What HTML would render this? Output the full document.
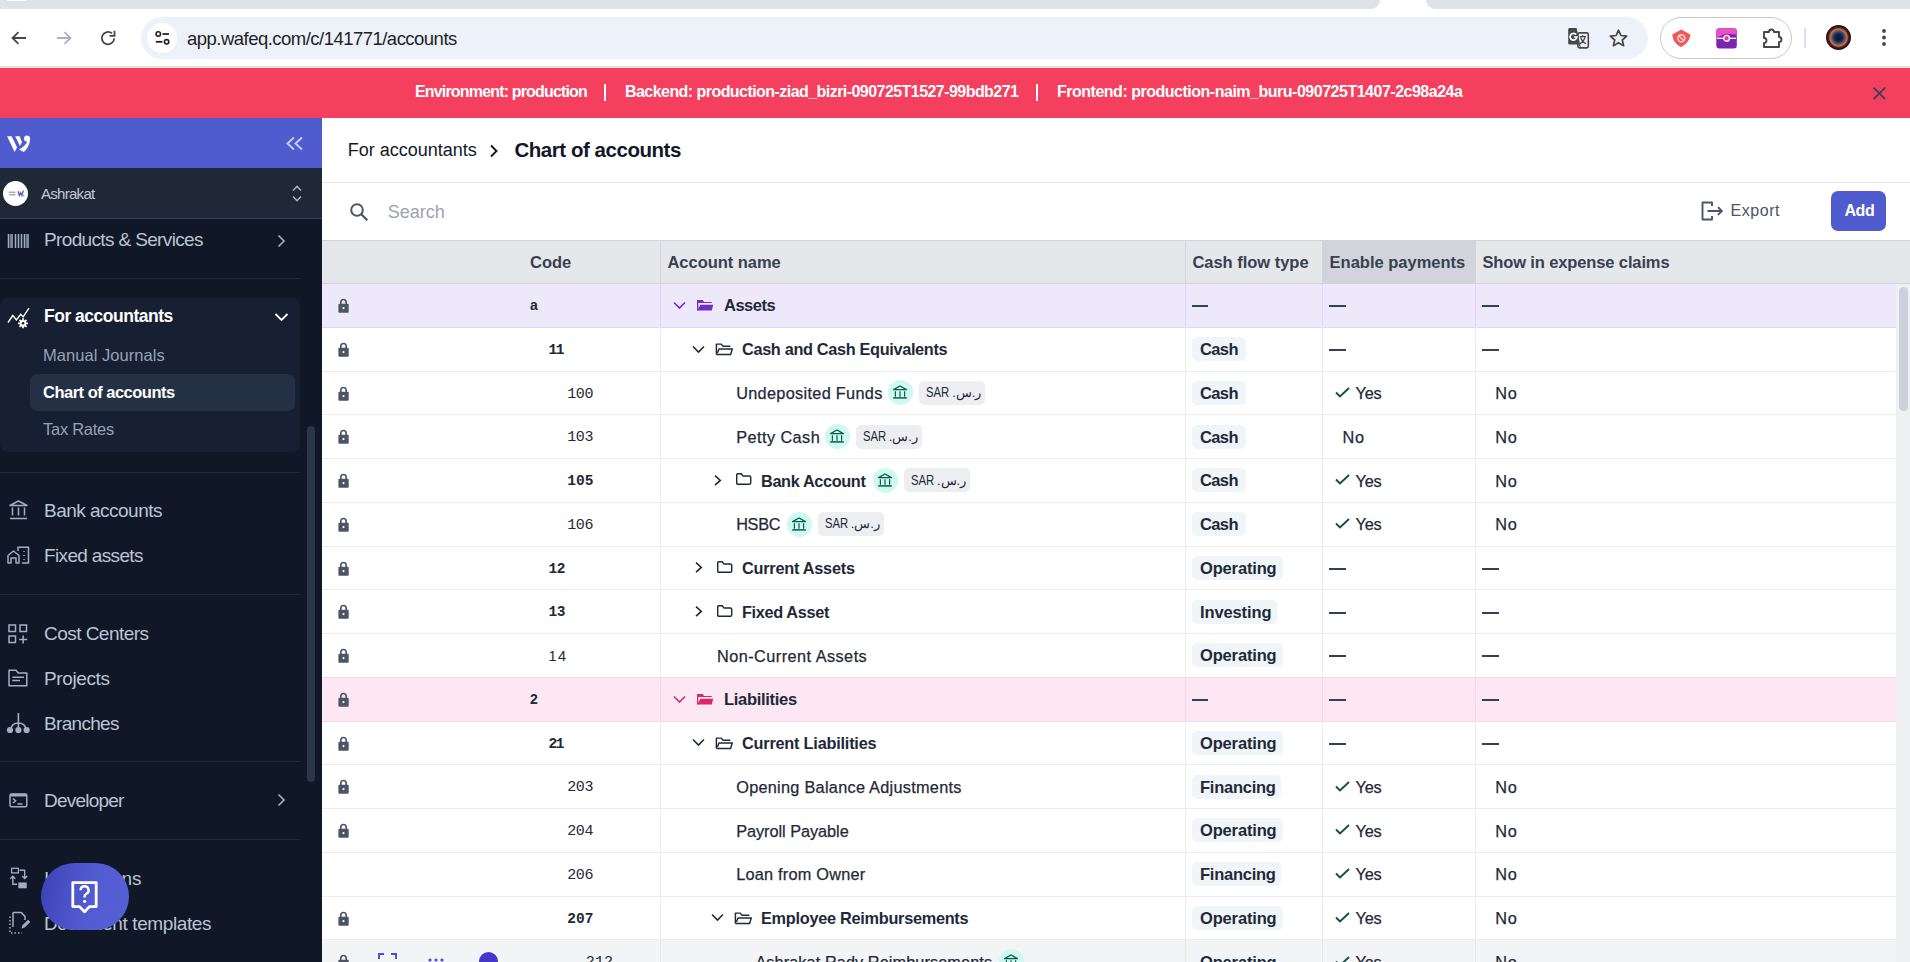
<!DOCTYPE html>
<html><head><meta charset="utf-8">
<style>
*{box-sizing:border-box;margin:0;padding:0}
html,body{width:1910px;height:962px;overflow:hidden;background:#fff;font-family:"Liberation Sans",sans-serif;position:relative}
.a{position:absolute;display:block}
.t{position:absolute;white-space:nowrap;line-height:1}
</style></head><body>
<div class="a" style="left:0px;top:0px;width:1910px;height:9px;background:#dee3ea;"></div>
<div class="a" style="left:1370px;top:0px;width:66px;height:9px;background:#fff;"></div>
<div class="a" style="left:1360px;top:0px;width:20px;height:9px;background:#dee3ea;border-bottom-right-radius:10px"></div>
<div class="a" style="left:1426px;top:0px;width:20px;height:9px;background:#dee3ea;border-bottom-left-radius:10px"></div>
<div class="a" style="left:7px;top:0px;width:19px;height:1px;background:#fff;"></div>
<div class="a" style="left:0px;top:9px;width:1910px;height:57px;background:#fff;"></div>
<div class="a" style="left:0px;top:66px;width:1910px;height:2px;background:#e1e3e6;"></div>
<div class="a" style="left:141px;top:17px;width:1507px;height:42px;background:#edf1f9;border-radius:21px"></div>
<div class="a" style="left:147px;top:23px;width:30px;height:30px;background:#fff;border-radius:50%"></div>
<svg class="a" style="left:10px;top:29px;" width="18" height="18" viewBox="0 0 18 18" fill="none"><path d="M16 9H3M8.5 3.2L2.5 9l6 5.8" stroke="#474747" stroke-width="1.8"/></svg>
<svg class="a" style="left:55px;top:29px;" width="18" height="18" viewBox="0 0 18 18" fill="none"><path d="M2 9h13M9.5 3.2L15.5 9l-6 5.8" stroke="#a9b1c9" stroke-width="1.8"/></svg>
<svg class="a" style="left:99px;top:29px;" width="18" height="18" viewBox="0 0 18 18" fill="none"><path d="M15.2 9.3A6.2 6.2 0 1 1 13 4.4" stroke="#474747" stroke-width="1.8"/><path d="M15.5 1.8v5h-5" stroke="#474747" stroke-width="1.8"/></svg>
<svg class="a" style="left:154px;top:30px;" width="17" height="16" viewBox="0 0 17 16" fill="none"><circle cx="4.3" cy="4" r="2.2" stroke="#222" stroke-width="1.6"/><path d="M8.5 4h6.5" stroke="#222" stroke-width="1.8"/><circle cx="12.6" cy="11.8" r="2.2" stroke="#222" stroke-width="1.6"/><path d="M1.8 11.8h6.6" stroke="#222" stroke-width="1.8"/></svg>
<span id="t0" class="t" style="left:187.00px;top:29.83px;font-size:18.5px;color:#1f1f1f;font-weight:400;font-family:'Liberation Sans',sans-serif;letter-spacing:-0.522px;">app.wafeq.com/c/141771/accounts</span>
<svg class="a" style="left:1560px;top:22px;" width="40" height="33" viewBox="0 0 40 33" fill="none"><rect x="17.9" y="10.9" width="10.4" height="15" rx="1.6" stroke="#474747" stroke-width="1.6"/><path d="M9.6 6h7L21 26.6l-2.6-4H9.6q-1.4 0-1.4-1.4V7.4Q8.2 6 9.6 6z" fill="#474747"/><path d="M16.2 12.6A3.4 3.4 0 1 0 16.9 15H13.9" stroke="#fff" stroke-width="1.7"/><path d="M19.8 14.6h6.2M22.8 13.1v1.5M20.6 15.3c.8 2.8 2.6 5 5.2 6.3M25 15.3c-.8 2.8-2.4 5-5 6.3" stroke="#474747" stroke-width="1.2"/></svg>
<svg class="a" style="left:1608px;top:28px;" width="21" height="20" viewBox="0 0 21 20" fill="none"><path d="M10.5 2.2l2.4 5.3 5.8.6-4.4 3.9 1.3 5.7-5.1-3-5.1 3 1.3-5.7-4.4-3.9 5.8-.6z" stroke="#474747" stroke-width="1.7" stroke-linejoin="round"/></svg>
<div class="a" style="left:1660px;top:17px;width:132px;height:42px;background:transparent;border:1px solid #c7cacc;border-radius:21px"></div>
<svg class="a" style="left:1671px;top:28px;" width="21" height="21" viewBox="0 0 21 21" fill="none"><path d="M10.3 1.5L19.3 6.4C19 12 15.2 16.6 9.9 18.9 4.8 16.6 1.6 12 1.3 6.4z" fill="#f05757"/><circle cx="10.3" cy="10.2" r="3.5" stroke="#fcd9d9" stroke-width="1.4"/><path d="M8 7.9l4.6 4.6" stroke="#fcd9d9" stroke-width="1.4"/></svg>
<svg class="a" style="left:1716px;top:28px;" width="21" height="21" viewBox="0 0 21 21" fill="none"><rect x="0.3" y="0.3" width="20.5" height="20.3" rx="3" fill="#7c24b2"/><path d="M0.3 3.3a3 3 0 0 1 3-3h14.5a3 3 0 0 1 3 3V6.2H13l-2.5-.1-2.4.4-7.8 3.2z" fill="#e84fc4"/><path d="M1 10.3h19" stroke="#fff" stroke-width="1.3"/><circle cx="10.6" cy="10.3" r="2.9" fill="#e83a9a" stroke="#fff" stroke-width="1.4"/></svg>
<svg class="a" style="left:1761px;top:27px;" width="23" height="21" viewBox="0 0 23 21" fill="none"><path d="M3 5h5a2.5 2.5 0 0 1 5 0h5v5a2.5 2.5 0 0 1 0 5v5H3v-4a2.5 2.5 0 0 0 0-5z" stroke="#474747" stroke-width="1.9" stroke-linejoin="round"/></svg>
<div class="a" style="left:1804px;top:28px;width:2px;height:20px;background:#dcdcf5;"></div>
<div class="a" style="left:1826px;top:25px;width:25px;height:25px;border-radius:50%;background:radial-gradient(circle closest-side,#0a1530 0,#132248 30%,#3a4e78 48%,#a86a40 62%,#c47a3a 68%,#5e2622 78%,#2e1218 90%,#22101a 100%)"></div>
<svg class="a" style="left:1880px;top:28px;" width="8" height="19" viewBox="0 0 8 19" fill="none"><circle cx="4" cy="3" r="1.9" fill="#474747"/><circle cx="4" cy="9.5" r="1.9" fill="#474747"/><circle cx="4" cy="16" r="1.9" fill="#474747"/></svg>
<div class="a" style="left:0px;top:68px;width:1910px;height:50px;background:#f43f5e;"></div>
<span id="t1" class="t" style="left:415.00px;top:83.62px;font-size:16px;color:#fff;font-weight:700;font-family:'Liberation Sans',sans-serif;letter-spacing:-0.833px;">Environment: production</span>
<div class="a" style="left:604px;top:84px;width:2px;height:17px;background:#fff;"></div>
<span id="t2" class="t" style="left:625.00px;top:83.62px;font-size:16px;color:#fff;font-weight:700;font-family:'Liberation Sans',sans-serif;letter-spacing:-0.551px;">Backend: production-ziad_bizri-090725T1527-99bdb271</span>
<div class="a" style="left:1036px;top:84px;width:2px;height:17px;background:#fff;"></div>
<span id="t3" class="t" style="left:1057.00px;top:83.62px;font-size:16px;color:#fff;font-weight:700;font-family:'Liberation Sans',sans-serif;letter-spacing:-0.489px;">Frontend: production-naim_buru-090725T1407-2c98a24a</span>
<svg class="a" style="left:1870px;top:84px;" width="18" height="18" viewBox="0 0 18 18" fill="none"><path d="M3.6 3.6l11.6 11.6M15.2 3.6L3.6 15.2" stroke="#334155" stroke-width="1.7"/></svg>
<div class="a" style="left:0px;top:118px;width:322px;height:844px;background:#101828;"></div>
<div class="a" style="left:0px;top:118px;width:322px;height:50px;background:#505bd0;"></div>
<svg class="a" style="left:0px;top:125px;" width="40" height="35" viewBox="0 0 40 35" fill="none"><path d="M7.1 11.3h4.6l5.4 11.3-2.5 4.4z" fill="#fff"/><path d="M15.1 11.3h4.6l2.2 6-1.9 3.7z" fill="#fff"/><path d="M24 12.9a2.9 2.9 0 1 1 6 1.6c-.3 5-3 10-6.3 12.5l-4.6-2.6c3.9-1.9 7.2-4.9 8-7.8A2.9 2.9 0 0 1 24 12.9z" fill="#fff"/></svg>
<svg class="a" style="left:285px;top:136px;" width="19" height="15" viewBox="0 0 19 15" fill="none"><path d="M9 1.5L2.5 7.5 9 13.5M17 1.5L10.5 7.5 17 13.5" stroke="#c9ccf4" stroke-width="1.9"/></svg>
<div class="a" style="left:0px;top:168px;width:322px;height:50px;background:#1e2837;"></div>
<div class="a" style="left:0px;top:218px;width:322px;height:1px;background:#334155;"></div>
<div class="a" style="left:3px;top:181px;width:25px;height:25px;border-radius:50%;background:#fff"></div>
<svg class="a" style="left:7px;top:189px;" width="18" height="9" viewBox="0 0 18 9" fill="none"><path d="M1.8 3.2h6.6M2.2 5.8h6.2" stroke="#6a7080" stroke-width="0.9"/><path d="M11 2l1.3 4.5 1.3-3 1.3 3L16.5 1.5" stroke="#4d5bd8" stroke-width="1.2"/><circle cx="16.6" cy="6.8" r="0.8" fill="#4aa3e8"/></svg>
<span id="t4" class="t" style="left:41.00px;top:186.04px;font-size:15px;color:#c3cad5;font-weight:400;font-family:'Liberation Sans',sans-serif;letter-spacing:-0.718px;">Ashrakat</span>
<svg class="a" style="left:290px;top:184px;" width="14" height="19" viewBox="0 0 14 19" fill="none"><path d="M3 6.5L7 2.5l4 4M3 12.5l4 4 4-4" stroke="#a2aec0" stroke-width="1.6"/></svg>
<svg class="a" style="left:7px;top:233px;" width="23" height="16" viewBox="0 0 23 16" fill="none"><path d="M1.5 1v14M5 1v14M8.5 1v14M11.5 1v14M14.5 1v14M17.5 1v14M21 1v14" stroke="#a2aec0" stroke-width="1.5"/><path d="M3.3 1v14M19.3 1v14" stroke="#a2aec0" stroke-width="0.8"/></svg>
<span id="t5" class="t" style="left:44.00px;top:230.27px;font-size:19px;color:#bac4d2;font-weight:400;font-family:'Liberation Sans',sans-serif;letter-spacing:-0.642px;">Products &amp; Services</span>
<svg class="a" style="left:275px;top:234px;" width="12" height="14" viewBox="0 0 12 14" fill="none"><path d="M3.5 1.5L9 7l-5.5 5.5" stroke="#a2aec0" stroke-width="1.7"/></svg>
<div class="a" style="left:0px;top:278px;width:300px;height:1px;background:#1f2a3a;"></div>
<div class="a" style="left:0px;top:298px;width:300px;height:154px;background:#172032;border-radius:8px"></div>
<svg class="a" style="left:7px;top:307px;" width="24" height="23" viewBox="0 0 24 23" fill="none"><path d="M1 15.5L5.8 8.5l3.6 4.4 4.3-5.6 2.4 2.6L22 1.2" stroke="#fff" stroke-width="1.4"/><circle cx="16" cy="16.3" r="3.4" fill="#fff"/><path d="M16 11.3v10M11 16.3h10M12.5 12.8l7 7M19.5 12.8l-7 7" stroke="#fff" stroke-width="1.7"/><circle cx="16" cy="16.3" r="1.3" fill="#172032"/></svg>
<span id="t6" class="t" style="left:44.00px;top:308.24px;font-size:17.5px;color:#fff;font-weight:700;font-family:'Liberation Sans',sans-serif;letter-spacing:-0.493px;">For accountants</span>
<svg class="a" style="left:274px;top:311px;" width="15" height="12" viewBox="0 0 15 12" fill="none"><path d="M1.5 3l6 6 6-6" stroke="#fff" stroke-width="1.8"/></svg>
<span id="t7" class="t" style="left:43.00px;top:347.26px;font-size:16.5px;color:#94a3b8;font-weight:400;font-family:'Liberation Sans',sans-serif;letter-spacing:0.049px;">Manual Journals</span>
<div class="a" style="left:30px;top:374px;width:265px;height:37px;background:#243044;border-radius:7px"></div>
<span id="t8" class="t" style="left:43.00px;top:384.36px;font-size:16.5px;color:#fff;font-weight:700;font-family:'Liberation Sans',sans-serif;letter-spacing:-0.506px;">Chart of accounts</span>
<span id="t9" class="t" style="left:43.00px;top:420.96px;font-size:16.5px;color:#94a3b8;font-weight:400;font-family:'Liberation Sans',sans-serif;letter-spacing:-0.264px;">Tax Rates</span>
<div class="a" style="left:0px;top:472px;width:300px;height:1px;background:#1f2a3a;"></div>
<svg class="a" style="left:8px;top:499px;" width="21" height="21" viewBox="0 0 21 21" fill="none"><path d="M2 6.5L10.5 2 19 6.5z" stroke="#a2aec0" stroke-width="1.5" stroke-linejoin="round"/><path d="M4.5 8.5v8M10.5 8.5v8M16.5 8.5v8M2 19.5h17" stroke="#a2aec0" stroke-width="1.5"/></svg>
<span id="t10" class="t" style="left:44.00px;top:501.37px;font-size:19px;color:#bac4d2;font-weight:400;font-family:'Liberation Sans',sans-serif;letter-spacing:-0.511px;">Bank accounts</span>
<svg class="a" style="left:7px;top:546px;" width="23" height="18" viewBox="0 0 23 18" fill="none"><path d="M1 17V9.5L6.5 5 12 9.5V17H9v-5H4v5z" stroke="#a2aec0" stroke-width="1.5" stroke-linejoin="round"/><path d="M11 5V1.2h10.5V17H15" stroke="#a2aec0" stroke-width="1.5"/><path d="M17 5v1M17 9v1M17 13v1" stroke="#a2aec0" stroke-width="1.5"/></svg>
<span id="t11" class="t" style="left:44.00px;top:546.37px;font-size:19px;color:#bac4d2;font-weight:400;font-family:'Liberation Sans',sans-serif;letter-spacing:-0.650px;">Fixed assets</span>
<div class="a" style="left:0px;top:594px;width:300px;height:1px;background:#1f2a3a;"></div>
<svg class="a" style="left:8px;top:624px;" width="21" height="20" viewBox="0 0 21 20" fill="none"><rect x="1" y="1" width="6.5" height="6.5" stroke="#a2aec0" stroke-width="1.5"/><rect x="12" y="1" width="6.5" height="6.5" stroke="#a2aec0" stroke-width="1.5"/><rect x="1" y="12" width="6.5" height="6.5" stroke="#a2aec0" stroke-width="1.5"/><path d="M15.2 11.5v8M11.2 15.5h8" stroke="#a2aec0" stroke-width="1.5"/></svg>
<span id="t12" class="t" style="left:44.00px;top:623.67px;font-size:19px;color:#bac4d2;font-weight:400;font-family:'Liberation Sans',sans-serif;letter-spacing:-0.534px;">Cost Centers</span>
<svg class="a" style="left:8px;top:669px;" width="21" height="18" viewBox="0 0 21 18" fill="none"><path d="M1 1.3h7l2.2 2.7h8.6v12.8H1z" stroke="#a2aec0" stroke-width="1.5" stroke-linejoin="round"/><path d="M4.3 8.3h11.7M4.3 11.6h7.7" stroke="#a2aec0" stroke-width="1.5"/></svg>
<span id="t13" class="t" style="left:44.00px;top:668.57px;font-size:19px;color:#bac4d2;font-weight:400;font-family:'Liberation Sans',sans-serif;letter-spacing:-0.376px;">Projects</span>
<svg class="a" style="left:6px;top:711px;" width="25" height="23" viewBox="0 0 25 23" fill="none"><path d="M12.4 2v17M4.5 18.5Q6 12 12.4 12T20.3 18.5" stroke="#a2aec0" stroke-width="1.6"/><circle cx="4" cy="19" r="3.1" fill="#a2aec0"/><circle cx="12.4" cy="19" r="3.1" fill="#a2aec0"/><circle cx="20.6" cy="19" r="3.1" fill="#a2aec0"/></svg>
<span id="t14" class="t" style="left:44.00px;top:713.77px;font-size:19px;color:#bac4d2;font-weight:400;font-family:'Liberation Sans',sans-serif;letter-spacing:-0.681px;">Branches</span>
<div class="a" style="left:0px;top:761px;width:300px;height:1px;background:#1f2a3a;"></div>
<svg class="a" style="left:0px;top:790px;" width="40" height="20" viewBox="0 0 40 20" fill="none"><rect x="10" y="4" width="16.8" height="12.8" rx="1.5" stroke="#a2aec0" stroke-width="1.5"/><path d="M10 5.2h16.8" stroke="#a2aec0" stroke-width="2.6"/><path d="M13 8.6l2.6 2.2-2.6 2.2M17.5 14h5" stroke="#a2aec0" stroke-width="1.4"/></svg>
<span id="t15" class="t" style="left:44.00px;top:790.97px;font-size:19px;color:#bac4d2;font-weight:400;font-family:'Liberation Sans',sans-serif;letter-spacing:-0.785px;">Developer</span>
<svg class="a" style="left:275px;top:793px;" width="12" height="14" viewBox="0 0 12 14" fill="none"><path d="M3.5 1.5L9 7l-5.5 5.5" stroke="#a2aec0" stroke-width="1.7"/></svg>
<div class="a" style="left:0px;top:839px;width:300px;height:1px;background:#1f2a3a;"></div>
<svg class="a" style="left:0px;top:862px;" width="40" height="30" viewBox="0 0 40 30" fill="none"><rect x="11.6" y="6.3" width="6.8" height="4.6" stroke="#a2aec0" stroke-width="1.3"/><path d="M12.8 23V14.2M10.3 16.7l2.5-2.5 2.5 2.5M12.8 22.3h4.2M19.5 8.2h5.2v8.3M22.2 14l2.5 2.5 2.5-2.5" stroke="#a2aec0" stroke-width="1.4"/><rect x="18.3" y="20.5" width="8.4" height="5.8" fill="#a2aec0"/></svg>
<span id="t16" class="t" style="left:44.00px;top:868.77px;font-size:19px;color:#bac4d2;font-weight:400;font-family:'Liberation Sans',sans-serif;letter-spacing:-0.162px;">Integrations</span>
<svg class="a" style="left:0px;top:906px;" width="40" height="30" viewBox="0 0 40 30" fill="none"><path d="M13 21V7.2q0-.8.8-.8h7.2l4 4v3.6" stroke="#a2aec0" stroke-width="1.5" stroke-linejoin="round"/><path d="M10 10.5v16.5h12" stroke="#a2aec0" stroke-width="1.5" stroke-dasharray="1.5 2"/><path d="M21.5 22.5l1-3.2 5.6-5.6 2.2 2.2-5.6 5.6z" fill="#a2aec0"/></svg>
<span id="t17" class="t" style="left:44.00px;top:913.77px;font-size:19px;color:#bac4d2;font-weight:400;font-family:'Liberation Sans',sans-serif;letter-spacing:-0.397px;">Document templates</span>
<div class="a" style="left:307px;top:426px;width:8px;height:356px;background:#2a3546;border-radius:4px"></div>
<div class="a" style="left:41px;top:863px;width:88px;height:67px;border-radius:34px;background:linear-gradient(100deg,#3a41b5 0%,#4a51c7 30%,#535bd3 55%,#5660d6 100%)"></div>
<svg class="a" style="left:70px;top:880px;" width="29" height="35" viewBox="0 0 29 35" fill="none"><path d="M2.8 2.6h23.4v24H19.5l-5 5.2-5-5.2H2.8z" stroke="#fff" stroke-width="2.8" stroke-linejoin="round"/><path d="M10.6 10.2a4 4 0 1 1 5.8 3.6c-1.2.7-1.8 1.4-1.8 2.8v.8" stroke="#fff" stroke-width="2.4"/><circle cx="14.6" cy="21.3" r="1.6" fill="#fff"/></svg>
<div class="a" style="left:322px;top:118px;width:1588px;height:844px;background:#fff;"></div>
<span id="t18" class="t" style="left:347.80px;top:140.69px;font-size:18px;color:#111827;font-weight:400;font-family:'Liberation Sans',sans-serif;letter-spacing:-0.005px;">For accountants</span>
<svg class="a" style="left:488px;top:144px;" width="12" height="14" viewBox="0 0 12 14" fill="none"><path d="M3 1.5L8.5 7 3 12.5" stroke="#111827" stroke-width="1.9"/></svg>
<span id="t19" class="t" style="left:514.40px;top:140.39px;font-size:20.5px;color:#111827;font-weight:700;font-family:'Liberation Sans',sans-serif;letter-spacing:-0.454px;">Chart of accounts</span>
<div class="a" style="left:322px;top:182px;width:1588px;height:1px;background:#e5e7eb;"></div>
<svg class="a" style="left:349px;top:202px;" width="20" height="19" viewBox="0 0 20 19" fill="none"><circle cx="8" cy="8" r="5.8" stroke="#4b5563" stroke-width="2"/><path d="M12.3 12.3l6 6" stroke="#4b5563" stroke-width="2.2"/></svg>
<span id="t20" class="t" style="left:387.70px;top:202.69px;font-size:18px;color:#9ca3af;font-weight:400;font-family:'Liberation Sans',sans-serif;letter-spacing:-0.004px;">Search</span>
<svg class="a" style="left:1701px;top:201px;" width="23" height="20" viewBox="0 0 23 20" fill="none"><path d="M11 5V1.5H1.5v17H11V15" stroke="#4b5563" stroke-width="1.9" stroke-linejoin="round"/><path d="M6.5 10h14M17 6.2l3.8 3.8-3.8 3.8" stroke="#4b5563" stroke-width="1.9"/></svg>
<span id="t21" class="t" style="left:1730.60px;top:203.42px;font-size:16px;color:#4b5563;font-weight:400;font-family:'Liberation Sans',sans-serif;letter-spacing:0.521px;">Export</span>
<div class="a" style="left:1831px;top:191px;width:55px;height:40px;background:#505bd0;border-radius:7px"></div>
<span id="t22" class="t" style="left:1844.40px;top:203.42px;font-size:16px;color:#fff;font-weight:700;font-family:'Liberation Sans',sans-serif;letter-spacing:-0.364px;">Add</span>
<div class="a" style="left:322px;top:240px;width:1588px;height:44px;background:#e5e7eb;border-top:1px solid #d1d5db;border-bottom:1px solid #d1d5db"></div>
<div class="a" style="left:1323px;top:241px;width:152px;height:42px;background:#d1d5db;"></div>
<div class="a" style="left:660px;top:241px;width:1px;height:42px;background:#d1d5db;"></div>
<div class="a" style="left:1185px;top:241px;width:1px;height:42px;background:#d1d5db;"></div>
<div class="a" style="left:1322px;top:241px;width:1px;height:42px;background:#d1d5db;"></div>
<div class="a" style="left:1475px;top:241px;width:1px;height:42px;background:#d1d5db;"></div>
<span id="t23" class="t" style="left:530.00px;top:254.06px;font-size:16.5px;color:#374151;font-weight:700;font-family:'Liberation Sans',sans-serif;letter-spacing:-0.024px;">Code</span>
<span id="t24" class="t" style="left:667.50px;top:254.06px;font-size:16.5px;color:#374151;font-weight:700;font-family:'Liberation Sans',sans-serif;letter-spacing:-0.046px;">Account name</span>
<span id="t25" class="t" style="left:1192.40px;top:254.06px;font-size:16.5px;color:#374151;font-weight:700;font-family:'Liberation Sans',sans-serif;letter-spacing:-0.020px;">Cash flow type</span>
<span id="t26" class="t" style="left:1329.60px;top:254.06px;font-size:16.5px;color:#374151;font-weight:700;font-family:'Liberation Sans',sans-serif;letter-spacing:-0.003px;">Enable payments</span>
<span id="t27" class="t" style="left:1482.40px;top:254.06px;font-size:16.5px;color:#374151;font-weight:700;font-family:'Liberation Sans',sans-serif;letter-spacing:-0.126px;">Show in expense claims</span>
<div class="a" style="left:322px;top:283.5px;width:1574px;height:43.75px;background:#ede9fb;"></div>
<div class="a" style="left:322px;top:326.75px;width:1574px;height:1px;background:#ddd6fe;"></div>
<div class="a" style="left:660px;top:283.5px;width:1px;height:43.75px;background:#ddd6fe;"></div>
<div class="a" style="left:1185px;top:283.5px;width:1px;height:43.75px;background:#ddd6fe;"></div>
<div class="a" style="left:1322px;top:283.5px;width:1px;height:43.75px;background:#ddd6fe;"></div>
<div class="a" style="left:1475px;top:283.5px;width:1px;height:43.75px;background:#ddd6fe;"></div>
<svg class="a" style="left:338px;top:298.075px;" width="11" height="16" viewBox="0 0 11 16" fill="none"><path d="M2.8 6V4.2a2.7 2.7 0 0 1 5.4 0V6" stroke="#4b5563" stroke-width="1.6"/><rect x="0.4" y="5.8" width="10.3" height="9" rx="1" fill="#4b5563"/><circle cx="5.5" cy="10.1" r="1.1" fill="#fff"/></svg>
<span id="t28" class="t" style="left:530.00px;top:298.43px;font-size:14px;color:#1f2937;font-weight:700;font-family:'Liberation Sans',sans-serif;letter-spacing:0.000px;">a</span>
<svg class="a" style="left:673px;top:300.875px;" width="13" height="9" viewBox="0 0 13 9" fill="none"><path d="M1 1.5l5.5 5.5L12 1.5" stroke="#6d28d9" stroke-width="1.6"/></svg>
<svg class="a" style="left:692px;top:295.0px;" width="26" height="20" viewBox="0 0 26 20" fill="none"><path d="M5 5h5.8l1.2 1.9h7.7v1H6.3v7.7H5z" fill="#6d2fc4"/><path d="M8.3 9.8h12.9l-1.4 5.8H5.2l1.3-2.4z" fill="#6d2fc4"/></svg>
<span id="t29" class="t" style="left:724.00px;top:297.44px;font-size:16.5px;color:#1f2937;font-weight:700;font-family:'Liberation Sans',sans-serif;letter-spacing:-0.488px;">Assets</span>
<div class="a" style="left:1192px;top:305px;width:16px;height:2px;background:#334155;"></div>
<div class="a" style="left:1329px;top:305px;width:17px;height:2px;background:#334155;"></div>
<div class="a" style="left:1482px;top:305px;width:17px;height:2px;background:#334155;"></div>
<div class="a" style="left:322px;top:370.5px;width:1574px;height:1px;background:#ececf0;"></div>
<div class="a" style="left:660px;top:327.25px;width:1px;height:43.75px;background:#ececf0;"></div>
<div class="a" style="left:1185px;top:327.25px;width:1px;height:43.75px;background:#ececf0;"></div>
<div class="a" style="left:1322px;top:327.25px;width:1px;height:43.75px;background:#ececf0;"></div>
<div class="a" style="left:1475px;top:327.25px;width:1px;height:43.75px;background:#ececf0;"></div>
<svg class="a" style="left:338px;top:341.825px;" width="11" height="16" viewBox="0 0 11 16" fill="none"><path d="M2.8 6V4.2a2.7 2.7 0 0 1 5.4 0V6" stroke="#4b5563" stroke-width="1.6"/><rect x="0.4" y="5.8" width="10.3" height="9" rx="1" fill="#4b5563"/><circle cx="5.5" cy="10.1" r="1.1" fill="#fff"/></svg>
<span id="t30" class="t" style="left:548.60px;top:342.82px;font-size:14.5px;color:#1f2937;font-weight:700;font-family:'Liberation Mono',monospace;letter-spacing:-1.501px;">11</span>
<svg class="a" style="left:692px;top:344.625px;" width="13" height="9" viewBox="0 0 13 9" fill="none"><path d="M1 1.5l5.5 5.5L12 1.5" stroke="#1f2937" stroke-width="1.6"/></svg>
<svg class="a" style="left:715px;top:343.125px;" width="19" height="13" viewBox="0 0 19 13" fill="none"><path d="M1.4 11.5V1.1h4.8l1.9 2.2h7.3" stroke="#1f2937" stroke-width="1.45" stroke-linejoin="round"/><path d="M1.4 11.5h14.2l1.7-5.6H4l-1.6 4.1" stroke="#1f2937" stroke-width="1.45" stroke-linejoin="round"/></svg>
<span id="t31" class="t" style="left:742.00px;top:341.41px;font-size:16.3px;color:#1f2937;font-weight:700;font-family:'Liberation Sans',sans-serif;letter-spacing:-0.332px;">Cash and Cash Equivalents</span>
<div class="a" style="left:1192px;top:337.125px;width:53.9px;height:24px;background:#f0f5fa;border-radius:5px"></div>
<span id="t32" class="t" style="left:1200.00px;top:341.19px;font-size:16.5px;color:#1f2937;font-weight:700;font-family:'Liberation Sans',sans-serif;letter-spacing:-0.623px;">Cash</span>
<div class="a" style="left:1329px;top:349px;width:17px;height:2px;background:#334155;"></div>
<div class="a" style="left:1482px;top:349px;width:17px;height:2px;background:#334155;"></div>
<div class="a" style="left:322px;top:414.25px;width:1574px;height:1px;background:#ececf0;"></div>
<div class="a" style="left:660px;top:371.0px;width:1px;height:43.75px;background:#ececf0;"></div>
<div class="a" style="left:1185px;top:371.0px;width:1px;height:43.75px;background:#ececf0;"></div>
<div class="a" style="left:1322px;top:371.0px;width:1px;height:43.75px;background:#ececf0;"></div>
<div class="a" style="left:1475px;top:371.0px;width:1px;height:43.75px;background:#ececf0;"></div>
<svg class="a" style="left:338px;top:385.575px;" width="11" height="16" viewBox="0 0 11 16" fill="none"><path d="M2.8 6V4.2a2.7 2.7 0 0 1 5.4 0V6" stroke="#4b5563" stroke-width="1.6"/><rect x="0.4" y="5.8" width="10.3" height="9" rx="1" fill="#4b5563"/><circle cx="5.5" cy="10.1" r="1.1" fill="#fff"/></svg>
<span id="t33" class="t" style="left:567.20px;top:386.51px;font-size:15px;color:#1f2937;font-weight:400;font-family:'Liberation Mono',monospace;letter-spacing:-0.401px;">100</span>
<span id="t34" class="t" style="left:736.20px;top:385.16px;font-size:16.3px;color:#1f2937;font-weight:400;font-family:'Liberation Sans',sans-serif;letter-spacing:0.309px;-webkit-text-stroke:0.25px #1f2937">Undeposited Funds</span>
<div class="a" style="left:888.2px;top:380.375px;width:25px;height:25px;border-radius:50%;background:#cdf9f0"></div>
<svg class="a" style="left:893.2px;top:385.375px;" width="15" height="15" viewBox="0 0 15 15" fill="none"><path d="M0.6 4.6L7 1 13.4 4.6z" stroke="#0f5a4a" stroke-width="1.3" stroke-linejoin="round"/><path d="M2.4 6.3v5.4M7 6.3v5.4M11.6 6.3v5.4" stroke="#0f5a4a" stroke-width="1.2"/><path d="M0.2 12.9h13.6" stroke="#0f5a4a" stroke-width="1.5"/></svg>
<div class="a" style="left:919.2px;top:380.875px;width:66px;height:24px;background:#eceef1;border-radius:5px"></div>
<span id="t35" class="t" style="left:926.00px;top:386.24px;font-size:13.9px;color:#1f2937;font-weight:400;font-family:'Liberation Sans',sans-serif;letter-spacing:0.000px;transform:scaleX(0.8132);transform-origin:0 0;">SAR</span>
<span id="t36" class="t" style="left:952.20px;top:386.15px;font-size:13px;color:#1f2937;font-weight:400;font-family:'Liberation Sans',sans-serif;letter-spacing:-0.208px;unicode-bidi:bidi-override;direction:ltr">.س.ر</span>
<div class="a" style="left:1192px;top:380.875px;width:53.9px;height:24px;background:#f0f5fa;border-radius:5px"></div>
<span id="t37" class="t" style="left:1200.00px;top:384.94px;font-size:16.5px;color:#1f2937;font-weight:700;font-family:'Liberation Sans',sans-serif;letter-spacing:-0.623px;">Cash</span>
<svg class="a" style="left:1335px;top:386.875px;" width="15" height="11" viewBox="0 0 15 11" fill="none"><path d="M1 5.5l4 4L14 1" stroke="#134e4a" stroke-width="1.9"/></svg>
<span id="t38" class="t" style="left:1355.50px;top:385.16px;font-size:16.3px;color:#1f2937;font-weight:400;font-family:'Liberation Sans',sans-serif;letter-spacing:-0.209px;-webkit-text-stroke:0.25px #1f2937">Yes</span>
<span id="t39" class="t" style="left:1495.30px;top:385.16px;font-size:16.3px;color:#1f2937;font-weight:400;font-family:'Liberation Sans',sans-serif;letter-spacing:0.742px;-webkit-text-stroke:0.25px #1f2937">No</span>
<div class="a" style="left:322px;top:458.0px;width:1574px;height:1px;background:#ececf0;"></div>
<div class="a" style="left:660px;top:414.75px;width:1px;height:43.75px;background:#ececf0;"></div>
<div class="a" style="left:1185px;top:414.75px;width:1px;height:43.75px;background:#ececf0;"></div>
<div class="a" style="left:1322px;top:414.75px;width:1px;height:43.75px;background:#ececf0;"></div>
<div class="a" style="left:1475px;top:414.75px;width:1px;height:43.75px;background:#ececf0;"></div>
<svg class="a" style="left:338px;top:429.325px;" width="11" height="16" viewBox="0 0 11 16" fill="none"><path d="M2.8 6V4.2a2.7 2.7 0 0 1 5.4 0V6" stroke="#4b5563" stroke-width="1.6"/><rect x="0.4" y="5.8" width="10.3" height="9" rx="1" fill="#4b5563"/><circle cx="5.5" cy="10.1" r="1.1" fill="#fff"/></svg>
<span id="t40" class="t" style="left:567.20px;top:430.26px;font-size:15px;color:#1f2937;font-weight:400;font-family:'Liberation Mono',monospace;letter-spacing:-0.401px;">103</span>
<span id="t41" class="t" style="left:736.20px;top:428.91px;font-size:16.3px;color:#1f2937;font-weight:400;font-family:'Liberation Sans',sans-serif;letter-spacing:0.436px;-webkit-text-stroke:0.25px #1f2937">Petty Cash</span>
<div class="a" style="left:824.7px;top:424.125px;width:25px;height:25px;border-radius:50%;background:#cdf9f0"></div>
<svg class="a" style="left:829.7px;top:429.125px;" width="15" height="15" viewBox="0 0 15 15" fill="none"><path d="M0.6 4.6L7 1 13.4 4.6z" stroke="#0f5a4a" stroke-width="1.3" stroke-linejoin="round"/><path d="M2.4 6.3v5.4M7 6.3v5.4M11.6 6.3v5.4" stroke="#0f5a4a" stroke-width="1.2"/><path d="M0.2 12.9h13.6" stroke="#0f5a4a" stroke-width="1.5"/></svg>
<div class="a" style="left:855.7px;top:424.625px;width:66px;height:24px;background:#eceef1;border-radius:5px"></div>
<span id="t42" class="t" style="left:862.50px;top:429.99px;font-size:13.9px;color:#1f2937;font-weight:400;font-family:'Liberation Sans',sans-serif;letter-spacing:0.000px;transform:scaleX(0.8132);transform-origin:0 0;">SAR</span>
<span id="t43" class="t" style="left:888.70px;top:429.90px;font-size:13px;color:#1f2937;font-weight:400;font-family:'Liberation Sans',sans-serif;letter-spacing:-0.208px;unicode-bidi:bidi-override;direction:ltr">.س.ر</span>
<div class="a" style="left:1192px;top:424.625px;width:53.9px;height:24px;background:#f0f5fa;border-radius:5px"></div>
<span id="t44" class="t" style="left:1200.00px;top:428.69px;font-size:16.5px;color:#1f2937;font-weight:700;font-family:'Liberation Sans',sans-serif;letter-spacing:-0.623px;">Cash</span>
<span id="t45" class="t" style="left:1342.50px;top:428.91px;font-size:16.3px;color:#1f2937;font-weight:400;font-family:'Liberation Sans',sans-serif;letter-spacing:0.742px;-webkit-text-stroke:0.25px #1f2937">No</span>
<span id="t46" class="t" style="left:1495.30px;top:428.91px;font-size:16.3px;color:#1f2937;font-weight:400;font-family:'Liberation Sans',sans-serif;letter-spacing:0.742px;-webkit-text-stroke:0.25px #1f2937">No</span>
<div class="a" style="left:322px;top:501.75px;width:1574px;height:1px;background:#ececf0;"></div>
<div class="a" style="left:660px;top:458.5px;width:1px;height:43.75px;background:#ececf0;"></div>
<div class="a" style="left:1185px;top:458.5px;width:1px;height:43.75px;background:#ececf0;"></div>
<div class="a" style="left:1322px;top:458.5px;width:1px;height:43.75px;background:#ececf0;"></div>
<div class="a" style="left:1475px;top:458.5px;width:1px;height:43.75px;background:#ececf0;"></div>
<svg class="a" style="left:338px;top:473.075px;" width="11" height="16" viewBox="0 0 11 16" fill="none"><path d="M2.8 6V4.2a2.7 2.7 0 0 1 5.4 0V6" stroke="#4b5563" stroke-width="1.6"/><rect x="0.4" y="5.8" width="10.3" height="9" rx="1" fill="#4b5563"/><circle cx="5.5" cy="10.1" r="1.1" fill="#fff"/></svg>
<span id="t47" class="t" style="left:567.20px;top:474.07px;font-size:14.5px;color:#1f2937;font-weight:700;font-family:'Liberation Mono',monospace;letter-spacing:0.049px;">105</span>
<svg class="a" style="left:713px;top:473.5px;" width="10" height="13" viewBox="0 0 10 13" fill="none"><path d="M2 1.7l5.3 4.7L2 11.2" stroke="#1f2937" stroke-width="1.6"/></svg>
<svg class="a" style="left:736px;top:473.375px;" width="16" height="13" viewBox="0 0 16 13" fill="none"><path d="M0.7 9.9V2.1Q0.7 0.7 2.1 0.7H5.3L6.9 2.9H13.3Q14.7 2.9 14.7 4.3V9.9Q14.7 11.3 13.3 11.3H2.1Q0.7 11.3 0.7 9.9Z" stroke="#1f2937" stroke-width="1.45" stroke-linejoin="round"/></svg>
<span id="t48" class="t" style="left:761.00px;top:472.66px;font-size:16.3px;color:#1f2937;font-weight:700;font-family:'Liberation Sans',sans-serif;letter-spacing:-0.367px;">Bank Account</span>
<div class="a" style="left:873px;top:467.875px;width:25px;height:25px;border-radius:50%;background:#cdf9f0"></div>
<svg class="a" style="left:878px;top:472.875px;" width="15" height="15" viewBox="0 0 15 15" fill="none"><path d="M0.6 4.6L7 1 13.4 4.6z" stroke="#0f5a4a" stroke-width="1.3" stroke-linejoin="round"/><path d="M2.4 6.3v5.4M7 6.3v5.4M11.6 6.3v5.4" stroke="#0f5a4a" stroke-width="1.2"/><path d="M0.2 12.9h13.6" stroke="#0f5a4a" stroke-width="1.5"/></svg>
<div class="a" style="left:904px;top:468.375px;width:66px;height:24px;background:#eceef1;border-radius:5px"></div>
<span id="t49" class="t" style="left:910.80px;top:473.74px;font-size:13.9px;color:#1f2937;font-weight:400;font-family:'Liberation Sans',sans-serif;letter-spacing:0.000px;transform:scaleX(0.8132);transform-origin:0 0;">SAR</span>
<span id="t50" class="t" style="left:937.00px;top:473.65px;font-size:13px;color:#1f2937;font-weight:400;font-family:'Liberation Sans',sans-serif;letter-spacing:-0.208px;unicode-bidi:bidi-override;direction:ltr">.س.ر</span>
<div class="a" style="left:1192px;top:468.375px;width:53.9px;height:24px;background:#f0f5fa;border-radius:5px"></div>
<span id="t51" class="t" style="left:1200.00px;top:472.44px;font-size:16.5px;color:#1f2937;font-weight:700;font-family:'Liberation Sans',sans-serif;letter-spacing:-0.623px;">Cash</span>
<svg class="a" style="left:1335px;top:474.375px;" width="15" height="11" viewBox="0 0 15 11" fill="none"><path d="M1 5.5l4 4L14 1" stroke="#134e4a" stroke-width="1.9"/></svg>
<span id="t52" class="t" style="left:1355.50px;top:472.66px;font-size:16.3px;color:#1f2937;font-weight:400;font-family:'Liberation Sans',sans-serif;letter-spacing:-0.209px;-webkit-text-stroke:0.25px #1f2937">Yes</span>
<span id="t53" class="t" style="left:1495.30px;top:472.66px;font-size:16.3px;color:#1f2937;font-weight:400;font-family:'Liberation Sans',sans-serif;letter-spacing:0.742px;-webkit-text-stroke:0.25px #1f2937">No</span>
<div class="a" style="left:322px;top:545.5px;width:1574px;height:1px;background:#ececf0;"></div>
<div class="a" style="left:660px;top:502.25px;width:1px;height:43.75px;background:#ececf0;"></div>
<div class="a" style="left:1185px;top:502.25px;width:1px;height:43.75px;background:#ececf0;"></div>
<div class="a" style="left:1322px;top:502.25px;width:1px;height:43.75px;background:#ececf0;"></div>
<div class="a" style="left:1475px;top:502.25px;width:1px;height:43.75px;background:#ececf0;"></div>
<svg class="a" style="left:338px;top:516.825px;" width="11" height="16" viewBox="0 0 11 16" fill="none"><path d="M2.8 6V4.2a2.7 2.7 0 0 1 5.4 0V6" stroke="#4b5563" stroke-width="1.6"/><rect x="0.4" y="5.8" width="10.3" height="9" rx="1" fill="#4b5563"/><circle cx="5.5" cy="10.1" r="1.1" fill="#fff"/></svg>
<span id="t54" class="t" style="left:567.20px;top:517.76px;font-size:15px;color:#1f2937;font-weight:400;font-family:'Liberation Mono',monospace;letter-spacing:-0.401px;">106</span>
<span id="t55" class="t" style="left:736.20px;top:516.41px;font-size:16.3px;color:#1f2937;font-weight:400;font-family:'Liberation Sans',sans-serif;letter-spacing:-0.326px;-webkit-text-stroke:0.25px #1f2937">HSBC</span>
<div class="a" style="left:786.7px;top:511.625px;width:25px;height:25px;border-radius:50%;background:#cdf9f0"></div>
<svg class="a" style="left:791.7px;top:516.625px;" width="15" height="15" viewBox="0 0 15 15" fill="none"><path d="M0.6 4.6L7 1 13.4 4.6z" stroke="#0f5a4a" stroke-width="1.3" stroke-linejoin="round"/><path d="M2.4 6.3v5.4M7 6.3v5.4M11.6 6.3v5.4" stroke="#0f5a4a" stroke-width="1.2"/><path d="M0.2 12.9h13.6" stroke="#0f5a4a" stroke-width="1.5"/></svg>
<div class="a" style="left:817.7px;top:512.125px;width:66px;height:24px;background:#eceef1;border-radius:5px"></div>
<span id="t56" class="t" style="left:824.50px;top:517.49px;font-size:13.9px;color:#1f2937;font-weight:400;font-family:'Liberation Sans',sans-serif;letter-spacing:0.000px;transform:scaleX(0.8132);transform-origin:0 0;">SAR</span>
<span id="t57" class="t" style="left:850.70px;top:517.40px;font-size:13px;color:#1f2937;font-weight:400;font-family:'Liberation Sans',sans-serif;letter-spacing:-0.208px;unicode-bidi:bidi-override;direction:ltr">.س.ر</span>
<div class="a" style="left:1192px;top:512.125px;width:53.9px;height:24px;background:#f0f5fa;border-radius:5px"></div>
<span id="t58" class="t" style="left:1200.00px;top:516.19px;font-size:16.5px;color:#1f2937;font-weight:700;font-family:'Liberation Sans',sans-serif;letter-spacing:-0.623px;">Cash</span>
<svg class="a" style="left:1335px;top:518.125px;" width="15" height="11" viewBox="0 0 15 11" fill="none"><path d="M1 5.5l4 4L14 1" stroke="#134e4a" stroke-width="1.9"/></svg>
<span id="t59" class="t" style="left:1355.50px;top:516.41px;font-size:16.3px;color:#1f2937;font-weight:400;font-family:'Liberation Sans',sans-serif;letter-spacing:-0.209px;-webkit-text-stroke:0.25px #1f2937">Yes</span>
<span id="t60" class="t" style="left:1495.30px;top:516.41px;font-size:16.3px;color:#1f2937;font-weight:400;font-family:'Liberation Sans',sans-serif;letter-spacing:0.742px;-webkit-text-stroke:0.25px #1f2937">No</span>
<div class="a" style="left:322px;top:589.25px;width:1574px;height:1px;background:#ececf0;"></div>
<div class="a" style="left:660px;top:546.0px;width:1px;height:43.75px;background:#ececf0;"></div>
<div class="a" style="left:1185px;top:546.0px;width:1px;height:43.75px;background:#ececf0;"></div>
<div class="a" style="left:1322px;top:546.0px;width:1px;height:43.75px;background:#ececf0;"></div>
<div class="a" style="left:1475px;top:546.0px;width:1px;height:43.75px;background:#ececf0;"></div>
<svg class="a" style="left:338px;top:560.575px;" width="11" height="16" viewBox="0 0 11 16" fill="none"><path d="M2.8 6V4.2a2.7 2.7 0 0 1 5.4 0V6" stroke="#4b5563" stroke-width="1.6"/><rect x="0.4" y="5.8" width="10.3" height="9" rx="1" fill="#4b5563"/><circle cx="5.5" cy="10.1" r="1.1" fill="#fff"/></svg>
<span id="t61" class="t" style="left:548.60px;top:561.57px;font-size:14.5px;color:#1f2937;font-weight:700;font-family:'Liberation Mono',monospace;letter-spacing:-0.501px;">12</span>
<svg class="a" style="left:694px;top:561.0px;" width="10" height="13" viewBox="0 0 10 13" fill="none"><path d="M2 1.7l5.3 4.7L2 11.2" stroke="#1f2937" stroke-width="1.6"/></svg>
<svg class="a" style="left:717px;top:560.875px;" width="16" height="13" viewBox="0 0 16 13" fill="none"><path d="M0.7 9.9V2.1Q0.7 0.7 2.1 0.7H5.3L6.9 2.9H13.3Q14.7 2.9 14.7 4.3V9.9Q14.7 11.3 13.3 11.3H2.1Q0.7 11.3 0.7 9.9Z" stroke="#1f2937" stroke-width="1.45" stroke-linejoin="round"/></svg>
<span id="t62" class="t" style="left:742.00px;top:560.16px;font-size:16.3px;color:#1f2937;font-weight:700;font-family:'Liberation Sans',sans-serif;letter-spacing:-0.243px;">Current Assets</span>
<div class="a" style="left:1192px;top:555.875px;width:91.1px;height:24px;background:#f0f5fa;border-radius:5px"></div>
<span id="t63" class="t" style="left:1200.00px;top:559.94px;font-size:16.5px;color:#1f2937;font-weight:700;font-family:'Liberation Sans',sans-serif;letter-spacing:-0.156px;">Operating</span>
<div class="a" style="left:1329px;top:568px;width:17px;height:2px;background:#334155;"></div>
<div class="a" style="left:1482px;top:568px;width:17px;height:2px;background:#334155;"></div>
<div class="a" style="left:322px;top:633.0px;width:1574px;height:1px;background:#ececf0;"></div>
<div class="a" style="left:660px;top:589.75px;width:1px;height:43.75px;background:#ececf0;"></div>
<div class="a" style="left:1185px;top:589.75px;width:1px;height:43.75px;background:#ececf0;"></div>
<div class="a" style="left:1322px;top:589.75px;width:1px;height:43.75px;background:#ececf0;"></div>
<div class="a" style="left:1475px;top:589.75px;width:1px;height:43.75px;background:#ececf0;"></div>
<svg class="a" style="left:338px;top:604.325px;" width="11" height="16" viewBox="0 0 11 16" fill="none"><path d="M2.8 6V4.2a2.7 2.7 0 0 1 5.4 0V6" stroke="#4b5563" stroke-width="1.6"/><rect x="0.4" y="5.8" width="10.3" height="9" rx="1" fill="#4b5563"/><circle cx="5.5" cy="10.1" r="1.1" fill="#fff"/></svg>
<span id="t64" class="t" style="left:548.60px;top:605.32px;font-size:14.5px;color:#1f2937;font-weight:700;font-family:'Liberation Mono',monospace;letter-spacing:-0.501px;">13</span>
<svg class="a" style="left:694px;top:604.75px;" width="10" height="13" viewBox="0 0 10 13" fill="none"><path d="M2 1.7l5.3 4.7L2 11.2" stroke="#1f2937" stroke-width="1.6"/></svg>
<svg class="a" style="left:717px;top:604.625px;" width="16" height="13" viewBox="0 0 16 13" fill="none"><path d="M0.7 9.9V2.1Q0.7 0.7 2.1 0.7H5.3L6.9 2.9H13.3Q14.7 2.9 14.7 4.3V9.9Q14.7 11.3 13.3 11.3H2.1Q0.7 11.3 0.7 9.9Z" stroke="#1f2937" stroke-width="1.45" stroke-linejoin="round"/></svg>
<span id="t65" class="t" style="left:742.00px;top:603.91px;font-size:16.3px;color:#1f2937;font-weight:700;font-family:'Liberation Sans',sans-serif;letter-spacing:-0.347px;">Fixed Asset</span>
<div class="a" style="left:1192px;top:599.625px;width:84.9px;height:24px;background:#f0f5fa;border-radius:5px"></div>
<span id="t66" class="t" style="left:1200.00px;top:603.69px;font-size:16.5px;color:#1f2937;font-weight:700;font-family:'Liberation Sans',sans-serif;letter-spacing:-0.119px;">Investing</span>
<div class="a" style="left:1329px;top:612px;width:17px;height:2px;background:#334155;"></div>
<div class="a" style="left:1482px;top:612px;width:17px;height:2px;background:#334155;"></div>
<div class="a" style="left:322px;top:676.75px;width:1574px;height:1px;background:#ececf0;"></div>
<div class="a" style="left:660px;top:633.5px;width:1px;height:43.75px;background:#ececf0;"></div>
<div class="a" style="left:1185px;top:633.5px;width:1px;height:43.75px;background:#ececf0;"></div>
<div class="a" style="left:1322px;top:633.5px;width:1px;height:43.75px;background:#ececf0;"></div>
<div class="a" style="left:1475px;top:633.5px;width:1px;height:43.75px;background:#ececf0;"></div>
<svg class="a" style="left:338px;top:648.075px;" width="11" height="16" viewBox="0 0 11 16" fill="none"><path d="M2.8 6V4.2a2.7 2.7 0 0 1 5.4 0V6" stroke="#4b5563" stroke-width="1.6"/><rect x="0.4" y="5.8" width="10.3" height="9" rx="1" fill="#4b5563"/><circle cx="5.5" cy="10.1" r="1.1" fill="#fff"/></svg>
<span id="t67" class="t" style="left:548.60px;top:648.67px;font-size:14.5px;color:#1f2937;font-weight:400;font-family:'Liberation Sans',sans-serif;letter-spacing:1.336px;">14</span>
<span id="t68" class="t" style="left:717.00px;top:647.66px;font-size:16.3px;color:#1f2937;font-weight:400;font-family:'Liberation Sans',sans-serif;letter-spacing:0.452px;-webkit-text-stroke:0.25px #1f2937">Non-Current Assets</span>
<div class="a" style="left:1192px;top:643.375px;width:91.1px;height:24px;background:#f0f5fa;border-radius:5px"></div>
<span id="t69" class="t" style="left:1200.00px;top:647.44px;font-size:16.5px;color:#1f2937;font-weight:700;font-family:'Liberation Sans',sans-serif;letter-spacing:-0.156px;">Operating</span>
<div class="a" style="left:1329px;top:655px;width:17px;height:2px;background:#334155;"></div>
<div class="a" style="left:1482px;top:655px;width:17px;height:2px;background:#334155;"></div>
<div class="a" style="left:322px;top:677.25px;width:1574px;height:43.75px;background:#fce7f3;"></div>
<div class="a" style="left:322px;top:677.25px;width:1574px;height:1px;background:#fbd6ea;"></div>
<div class="a" style="left:322px;top:720.5px;width:1574px;height:1px;background:#fbd6ea;"></div>
<div class="a" style="left:660px;top:677.25px;width:1px;height:43.75px;background:#fbd6ea;"></div>
<div class="a" style="left:1185px;top:677.25px;width:1px;height:43.75px;background:#fbd6ea;"></div>
<div class="a" style="left:1322px;top:677.25px;width:1px;height:43.75px;background:#fbd6ea;"></div>
<div class="a" style="left:1475px;top:677.25px;width:1px;height:43.75px;background:#fbd6ea;"></div>
<svg class="a" style="left:338px;top:691.825px;" width="11" height="16" viewBox="0 0 11 16" fill="none"><path d="M2.8 6V4.2a2.7 2.7 0 0 1 5.4 0V6" stroke="#4b5563" stroke-width="1.6"/><rect x="0.4" y="5.8" width="10.3" height="9" rx="1" fill="#4b5563"/><circle cx="5.5" cy="10.1" r="1.1" fill="#fff"/></svg>
<span id="t70" class="t" style="left:530.00px;top:692.18px;font-size:14px;color:#1f2937;font-weight:700;font-family:'Liberation Sans',sans-serif;letter-spacing:0.000px;">2</span>
<svg class="a" style="left:673px;top:694.625px;" width="13" height="9" viewBox="0 0 13 9" fill="none"><path d="M1 1.5l5.5 5.5L12 1.5" stroke="#db2777" stroke-width="1.6"/></svg>
<svg class="a" style="left:692px;top:688.75px;" width="26" height="20" viewBox="0 0 26 20" fill="none"><path d="M5 5h5.8l1.2 1.9h7.7v1H6.3v7.7H5z" fill="#db2763"/><path d="M8.3 9.8h12.9l-1.4 5.8H5.2l1.3-2.4z" fill="#db2763"/></svg>
<span id="t71" class="t" style="left:724.00px;top:691.19px;font-size:16.5px;color:#1f2937;font-weight:700;font-family:'Liberation Sans',sans-serif;letter-spacing:-0.293px;">Liabilities</span>
<div class="a" style="left:1192px;top:699px;width:16px;height:2px;background:#334155;"></div>
<div class="a" style="left:1329px;top:699px;width:17px;height:2px;background:#334155;"></div>
<div class="a" style="left:1482px;top:699px;width:17px;height:2px;background:#334155;"></div>
<div class="a" style="left:322px;top:764.25px;width:1574px;height:1px;background:#ececf0;"></div>
<div class="a" style="left:660px;top:721.0px;width:1px;height:43.75px;background:#ececf0;"></div>
<div class="a" style="left:1185px;top:721.0px;width:1px;height:43.75px;background:#ececf0;"></div>
<div class="a" style="left:1322px;top:721.0px;width:1px;height:43.75px;background:#ececf0;"></div>
<div class="a" style="left:1475px;top:721.0px;width:1px;height:43.75px;background:#ececf0;"></div>
<svg class="a" style="left:338px;top:735.575px;" width="11" height="16" viewBox="0 0 11 16" fill="none"><path d="M2.8 6V4.2a2.7 2.7 0 0 1 5.4 0V6" stroke="#4b5563" stroke-width="1.6"/><rect x="0.4" y="5.8" width="10.3" height="9" rx="1" fill="#4b5563"/><circle cx="5.5" cy="10.1" r="1.1" fill="#fff"/></svg>
<span id="t72" class="t" style="left:548.60px;top:736.57px;font-size:14.5px;color:#1f2937;font-weight:700;font-family:'Liberation Mono',monospace;letter-spacing:-1.501px;">21</span>
<svg class="a" style="left:692px;top:738.375px;" width="13" height="9" viewBox="0 0 13 9" fill="none"><path d="M1 1.5l5.5 5.5L12 1.5" stroke="#1f2937" stroke-width="1.6"/></svg>
<svg class="a" style="left:715px;top:736.875px;" width="19" height="13" viewBox="0 0 19 13" fill="none"><path d="M1.4 11.5V1.1h4.8l1.9 2.2h7.3" stroke="#1f2937" stroke-width="1.45" stroke-linejoin="round"/><path d="M1.4 11.5h14.2l1.7-5.6H4l-1.6 4.1" stroke="#1f2937" stroke-width="1.45" stroke-linejoin="round"/></svg>
<span id="t73" class="t" style="left:742.00px;top:735.16px;font-size:16.3px;color:#1f2937;font-weight:700;font-family:'Liberation Sans',sans-serif;letter-spacing:-0.214px;">Current Liabilities</span>
<div class="a" style="left:1192px;top:730.875px;width:91.1px;height:24px;background:#f0f5fa;border-radius:5px"></div>
<span id="t74" class="t" style="left:1200.00px;top:734.94px;font-size:16.5px;color:#1f2937;font-weight:700;font-family:'Liberation Sans',sans-serif;letter-spacing:-0.156px;">Operating</span>
<div class="a" style="left:1329px;top:743px;width:17px;height:2px;background:#334155;"></div>
<div class="a" style="left:1482px;top:743px;width:17px;height:2px;background:#334155;"></div>
<div class="a" style="left:322px;top:808.0px;width:1574px;height:1px;background:#ececf0;"></div>
<div class="a" style="left:660px;top:764.75px;width:1px;height:43.75px;background:#ececf0;"></div>
<div class="a" style="left:1185px;top:764.75px;width:1px;height:43.75px;background:#ececf0;"></div>
<div class="a" style="left:1322px;top:764.75px;width:1px;height:43.75px;background:#ececf0;"></div>
<div class="a" style="left:1475px;top:764.75px;width:1px;height:43.75px;background:#ececf0;"></div>
<svg class="a" style="left:338px;top:779.325px;" width="11" height="16" viewBox="0 0 11 16" fill="none"><path d="M2.8 6V4.2a2.7 2.7 0 0 1 5.4 0V6" stroke="#4b5563" stroke-width="1.6"/><rect x="0.4" y="5.8" width="10.3" height="9" rx="1" fill="#4b5563"/><circle cx="5.5" cy="10.1" r="1.1" fill="#fff"/></svg>
<span id="t75" class="t" style="left:567.20px;top:780.26px;font-size:15px;color:#1f2937;font-weight:400;font-family:'Liberation Mono',monospace;letter-spacing:-0.401px;">203</span>
<span id="t76" class="t" style="left:736.20px;top:778.91px;font-size:16.3px;color:#1f2937;font-weight:400;font-family:'Liberation Sans',sans-serif;letter-spacing:0.274px;-webkit-text-stroke:0.25px #1f2937">Opening Balance Adjustments</span>
<div class="a" style="left:1192px;top:774.625px;width:89.3px;height:24px;background:#f0f5fa;border-radius:5px"></div>
<span id="t77" class="t" style="left:1200.00px;top:778.69px;font-size:16.5px;color:#1f2937;font-weight:700;font-family:'Liberation Sans',sans-serif;letter-spacing:-0.255px;">Financing</span>
<svg class="a" style="left:1335px;top:780.625px;" width="15" height="11" viewBox="0 0 15 11" fill="none"><path d="M1 5.5l4 4L14 1" stroke="#134e4a" stroke-width="1.9"/></svg>
<span id="t78" class="t" style="left:1355.50px;top:778.91px;font-size:16.3px;color:#1f2937;font-weight:400;font-family:'Liberation Sans',sans-serif;letter-spacing:-0.209px;-webkit-text-stroke:0.25px #1f2937">Yes</span>
<span id="t79" class="t" style="left:1495.30px;top:778.91px;font-size:16.3px;color:#1f2937;font-weight:400;font-family:'Liberation Sans',sans-serif;letter-spacing:0.742px;-webkit-text-stroke:0.25px #1f2937">No</span>
<div class="a" style="left:322px;top:851.75px;width:1574px;height:1px;background:#ececf0;"></div>
<div class="a" style="left:660px;top:808.5px;width:1px;height:43.75px;background:#ececf0;"></div>
<div class="a" style="left:1185px;top:808.5px;width:1px;height:43.75px;background:#ececf0;"></div>
<div class="a" style="left:1322px;top:808.5px;width:1px;height:43.75px;background:#ececf0;"></div>
<div class="a" style="left:1475px;top:808.5px;width:1px;height:43.75px;background:#ececf0;"></div>
<svg class="a" style="left:338px;top:823.075px;" width="11" height="16" viewBox="0 0 11 16" fill="none"><path d="M2.8 6V4.2a2.7 2.7 0 0 1 5.4 0V6" stroke="#4b5563" stroke-width="1.6"/><rect x="0.4" y="5.8" width="10.3" height="9" rx="1" fill="#4b5563"/><circle cx="5.5" cy="10.1" r="1.1" fill="#fff"/></svg>
<span id="t80" class="t" style="left:567.20px;top:824.01px;font-size:15px;color:#1f2937;font-weight:400;font-family:'Liberation Mono',monospace;letter-spacing:-0.401px;">204</span>
<span id="t81" class="t" style="left:736.20px;top:822.66px;font-size:16.3px;color:#1f2937;font-weight:400;font-family:'Liberation Sans',sans-serif;letter-spacing:-0.041px;-webkit-text-stroke:0.25px #1f2937">Payroll Payable</span>
<div class="a" style="left:1192px;top:818.375px;width:91.1px;height:24px;background:#f0f5fa;border-radius:5px"></div>
<span id="t82" class="t" style="left:1200.00px;top:822.44px;font-size:16.5px;color:#1f2937;font-weight:700;font-family:'Liberation Sans',sans-serif;letter-spacing:-0.156px;">Operating</span>
<svg class="a" style="left:1335px;top:824.375px;" width="15" height="11" viewBox="0 0 15 11" fill="none"><path d="M1 5.5l4 4L14 1" stroke="#134e4a" stroke-width="1.9"/></svg>
<span id="t83" class="t" style="left:1355.50px;top:822.66px;font-size:16.3px;color:#1f2937;font-weight:400;font-family:'Liberation Sans',sans-serif;letter-spacing:-0.209px;-webkit-text-stroke:0.25px #1f2937">Yes</span>
<span id="t84" class="t" style="left:1495.30px;top:822.66px;font-size:16.3px;color:#1f2937;font-weight:400;font-family:'Liberation Sans',sans-serif;letter-spacing:0.742px;-webkit-text-stroke:0.25px #1f2937">No</span>
<div class="a" style="left:322px;top:895.5px;width:1574px;height:1px;background:#ececf0;"></div>
<div class="a" style="left:660px;top:852.25px;width:1px;height:43.75px;background:#ececf0;"></div>
<div class="a" style="left:1185px;top:852.25px;width:1px;height:43.75px;background:#ececf0;"></div>
<div class="a" style="left:1322px;top:852.25px;width:1px;height:43.75px;background:#ececf0;"></div>
<div class="a" style="left:1475px;top:852.25px;width:1px;height:43.75px;background:#ececf0;"></div>
<span id="t85" class="t" style="left:567.20px;top:867.76px;font-size:15px;color:#1f2937;font-weight:400;font-family:'Liberation Mono',monospace;letter-spacing:-0.401px;">206</span>
<span id="t86" class="t" style="left:736.20px;top:866.41px;font-size:16.3px;color:#1f2937;font-weight:400;font-family:'Liberation Sans',sans-serif;letter-spacing:0.224px;-webkit-text-stroke:0.25px #1f2937">Loan from Owner</span>
<div class="a" style="left:1192px;top:862.125px;width:89.3px;height:24px;background:#f0f5fa;border-radius:5px"></div>
<span id="t87" class="t" style="left:1200.00px;top:866.19px;font-size:16.5px;color:#1f2937;font-weight:700;font-family:'Liberation Sans',sans-serif;letter-spacing:-0.255px;">Financing</span>
<svg class="a" style="left:1335px;top:868.125px;" width="15" height="11" viewBox="0 0 15 11" fill="none"><path d="M1 5.5l4 4L14 1" stroke="#134e4a" stroke-width="1.9"/></svg>
<span id="t88" class="t" style="left:1355.50px;top:866.41px;font-size:16.3px;color:#1f2937;font-weight:400;font-family:'Liberation Sans',sans-serif;letter-spacing:-0.209px;-webkit-text-stroke:0.25px #1f2937">Yes</span>
<span id="t89" class="t" style="left:1495.30px;top:866.41px;font-size:16.3px;color:#1f2937;font-weight:400;font-family:'Liberation Sans',sans-serif;letter-spacing:0.742px;-webkit-text-stroke:0.25px #1f2937">No</span>
<div class="a" style="left:322px;top:939.25px;width:1574px;height:1px;background:#ececf0;"></div>
<div class="a" style="left:660px;top:896.0px;width:1px;height:43.75px;background:#ececf0;"></div>
<div class="a" style="left:1185px;top:896.0px;width:1px;height:43.75px;background:#ececf0;"></div>
<div class="a" style="left:1322px;top:896.0px;width:1px;height:43.75px;background:#ececf0;"></div>
<div class="a" style="left:1475px;top:896.0px;width:1px;height:43.75px;background:#ececf0;"></div>
<svg class="a" style="left:338px;top:910.575px;" width="11" height="16" viewBox="0 0 11 16" fill="none"><path d="M2.8 6V4.2a2.7 2.7 0 0 1 5.4 0V6" stroke="#4b5563" stroke-width="1.6"/><rect x="0.4" y="5.8" width="10.3" height="9" rx="1" fill="#4b5563"/><circle cx="5.5" cy="10.1" r="1.1" fill="#fff"/></svg>
<span id="t90" class="t" style="left:567.20px;top:911.57px;font-size:14.5px;color:#1f2937;font-weight:700;font-family:'Liberation Mono',monospace;letter-spacing:0.049px;">207</span>
<svg class="a" style="left:711px;top:913.375px;" width="13" height="9" viewBox="0 0 13 9" fill="none"><path d="M1 1.5l5.5 5.5L12 1.5" stroke="#1f2937" stroke-width="1.6"/></svg>
<svg class="a" style="left:734px;top:911.875px;" width="19" height="13" viewBox="0 0 19 13" fill="none"><path d="M1.4 11.5V1.1h4.8l1.9 2.2h7.3" stroke="#1f2937" stroke-width="1.45" stroke-linejoin="round"/><path d="M1.4 11.5h14.2l1.7-5.6H4l-1.6 4.1" stroke="#1f2937" stroke-width="1.45" stroke-linejoin="round"/></svg>
<span id="t91" class="t" style="left:761.00px;top:910.16px;font-size:16.3px;color:#1f2937;font-weight:700;font-family:'Liberation Sans',sans-serif;letter-spacing:-0.272px;">Employee Reimbursements</span>
<div class="a" style="left:1192px;top:905.875px;width:91.1px;height:24px;background:#f0f5fa;border-radius:5px"></div>
<span id="t92" class="t" style="left:1200.00px;top:909.94px;font-size:16.5px;color:#1f2937;font-weight:700;font-family:'Liberation Sans',sans-serif;letter-spacing:-0.156px;">Operating</span>
<svg class="a" style="left:1335px;top:911.875px;" width="15" height="11" viewBox="0 0 15 11" fill="none"><path d="M1 5.5l4 4L14 1" stroke="#134e4a" stroke-width="1.9"/></svg>
<span id="t93" class="t" style="left:1355.50px;top:910.16px;font-size:16.3px;color:#1f2937;font-weight:400;font-family:'Liberation Sans',sans-serif;letter-spacing:-0.209px;-webkit-text-stroke:0.25px #1f2937">Yes</span>
<span id="t94" class="t" style="left:1495.30px;top:910.16px;font-size:16.3px;color:#1f2937;font-weight:400;font-family:'Liberation Sans',sans-serif;letter-spacing:0.742px;-webkit-text-stroke:0.25px #1f2937">No</span>
<div class="a" style="left:322px;top:939.75px;width:1574px;height:43.75px;background:#f3f4f6;"></div>
<div class="a" style="left:322px;top:983.0px;width:1574px;height:1px;background:#e5e7eb;"></div>
<div class="a" style="left:660px;top:939.75px;width:1px;height:43.75px;background:#e5e7eb;"></div>
<div class="a" style="left:1185px;top:939.75px;width:1px;height:43.75px;background:#e5e7eb;"></div>
<div class="a" style="left:1322px;top:939.75px;width:1px;height:43.75px;background:#e5e7eb;"></div>
<div class="a" style="left:1475px;top:939.75px;width:1px;height:43.75px;background:#e5e7eb;"></div>
<svg class="a" style="left:338px;top:954.325px;" width="11" height="16" viewBox="0 0 11 16" fill="none"><path d="M2.8 6V4.2a2.7 2.7 0 0 1 5.4 0V6" stroke="#4b5563" stroke-width="1.6"/><rect x="0.4" y="5.8" width="10.3" height="9" rx="1" fill="#4b5563"/><circle cx="5.5" cy="10.1" r="1.1" fill="#fff"/></svg>
<span id="t95" class="t" style="left:585.80px;top:955.26px;font-size:15px;color:#1f2937;font-weight:400;font-family:'Liberation Mono',monospace;letter-spacing:0.099px;">212</span>
<span id="t96" class="t" style="left:755.40px;top:953.91px;font-size:16.3px;color:#1f2937;font-weight:400;font-family:'Liberation Sans',sans-serif;letter-spacing:0.084px;-webkit-text-stroke:0.25px #1f2937">Ashrakat Rady Reimbursements</span>
<div class="a" style="left:998.9px;top:949.125px;width:25px;height:25px;border-radius:50%;background:#cdf9f0"></div>
<svg class="a" style="left:1003.9px;top:954.125px;" width="15" height="15" viewBox="0 0 15 15" fill="none"><path d="M0.6 4.6L7 1 13.4 4.6z" stroke="#0f5a4a" stroke-width="1.3" stroke-linejoin="round"/><path d="M2.4 6.3v5.4M7 6.3v5.4M11.6 6.3v5.4" stroke="#0f5a4a" stroke-width="1.2"/><path d="M0.2 12.9h13.6" stroke="#0f5a4a" stroke-width="1.5"/></svg>
<div class="a" style="left:1192px;top:949.625px;width:91.1px;height:24px;background:#f0f5fa;border-radius:5px"></div>
<span id="t97" class="t" style="left:1200.00px;top:953.69px;font-size:16.5px;color:#1f2937;font-weight:700;font-family:'Liberation Sans',sans-serif;letter-spacing:-0.156px;">Operating</span>
<svg class="a" style="left:1335px;top:955.625px;" width="15" height="11" viewBox="0 0 15 11" fill="none"><path d="M1 5.5l4 4L14 1" stroke="#134e4a" stroke-width="1.9"/></svg>
<span id="t98" class="t" style="left:1355.50px;top:953.91px;font-size:16.3px;color:#1f2937;font-weight:400;font-family:'Liberation Sans',sans-serif;letter-spacing:-0.209px;-webkit-text-stroke:0.25px #1f2937">Yes</span>
<span id="t99" class="t" style="left:1495.30px;top:953.91px;font-size:16.3px;color:#1f2937;font-weight:400;font-family:'Liberation Sans',sans-serif;letter-spacing:0.742px;-webkit-text-stroke:0.25px #1f2937">No</span>
<svg class="a" style="left:378px;top:953px;" width="19" height="19" viewBox="0 0 19 19" fill="none"><path d="M1 6V1h5M13 1h5v5M18 13v5h-5M6 18H1v-5" stroke="#4f46e5" stroke-width="1.9"/></svg>
<svg class="a" style="left:428px;top:958px;" width="16" height="4" viewBox="0 0 16 4" fill="none"><circle cx="2" cy="2" r="1.6" fill="#4f46e5"/><circle cx="8" cy="2" r="1.6" fill="#4f46e5"/><circle cx="14" cy="2" r="1.6" fill="#4f46e5"/></svg>
<div class="a" style="left:478.5px;top:952px;width:19px;height:19px;border-radius:50%;background:#4338ca"></div>
<div class="a" style="left:1896px;top:284px;width:14px;height:678px;background:#eef0f2;"></div>
<div class="a" style="left:1899px;top:287px;width:9px;height:124px;background:#cad1db;border-radius:4.5px"></div>
</body></html>
